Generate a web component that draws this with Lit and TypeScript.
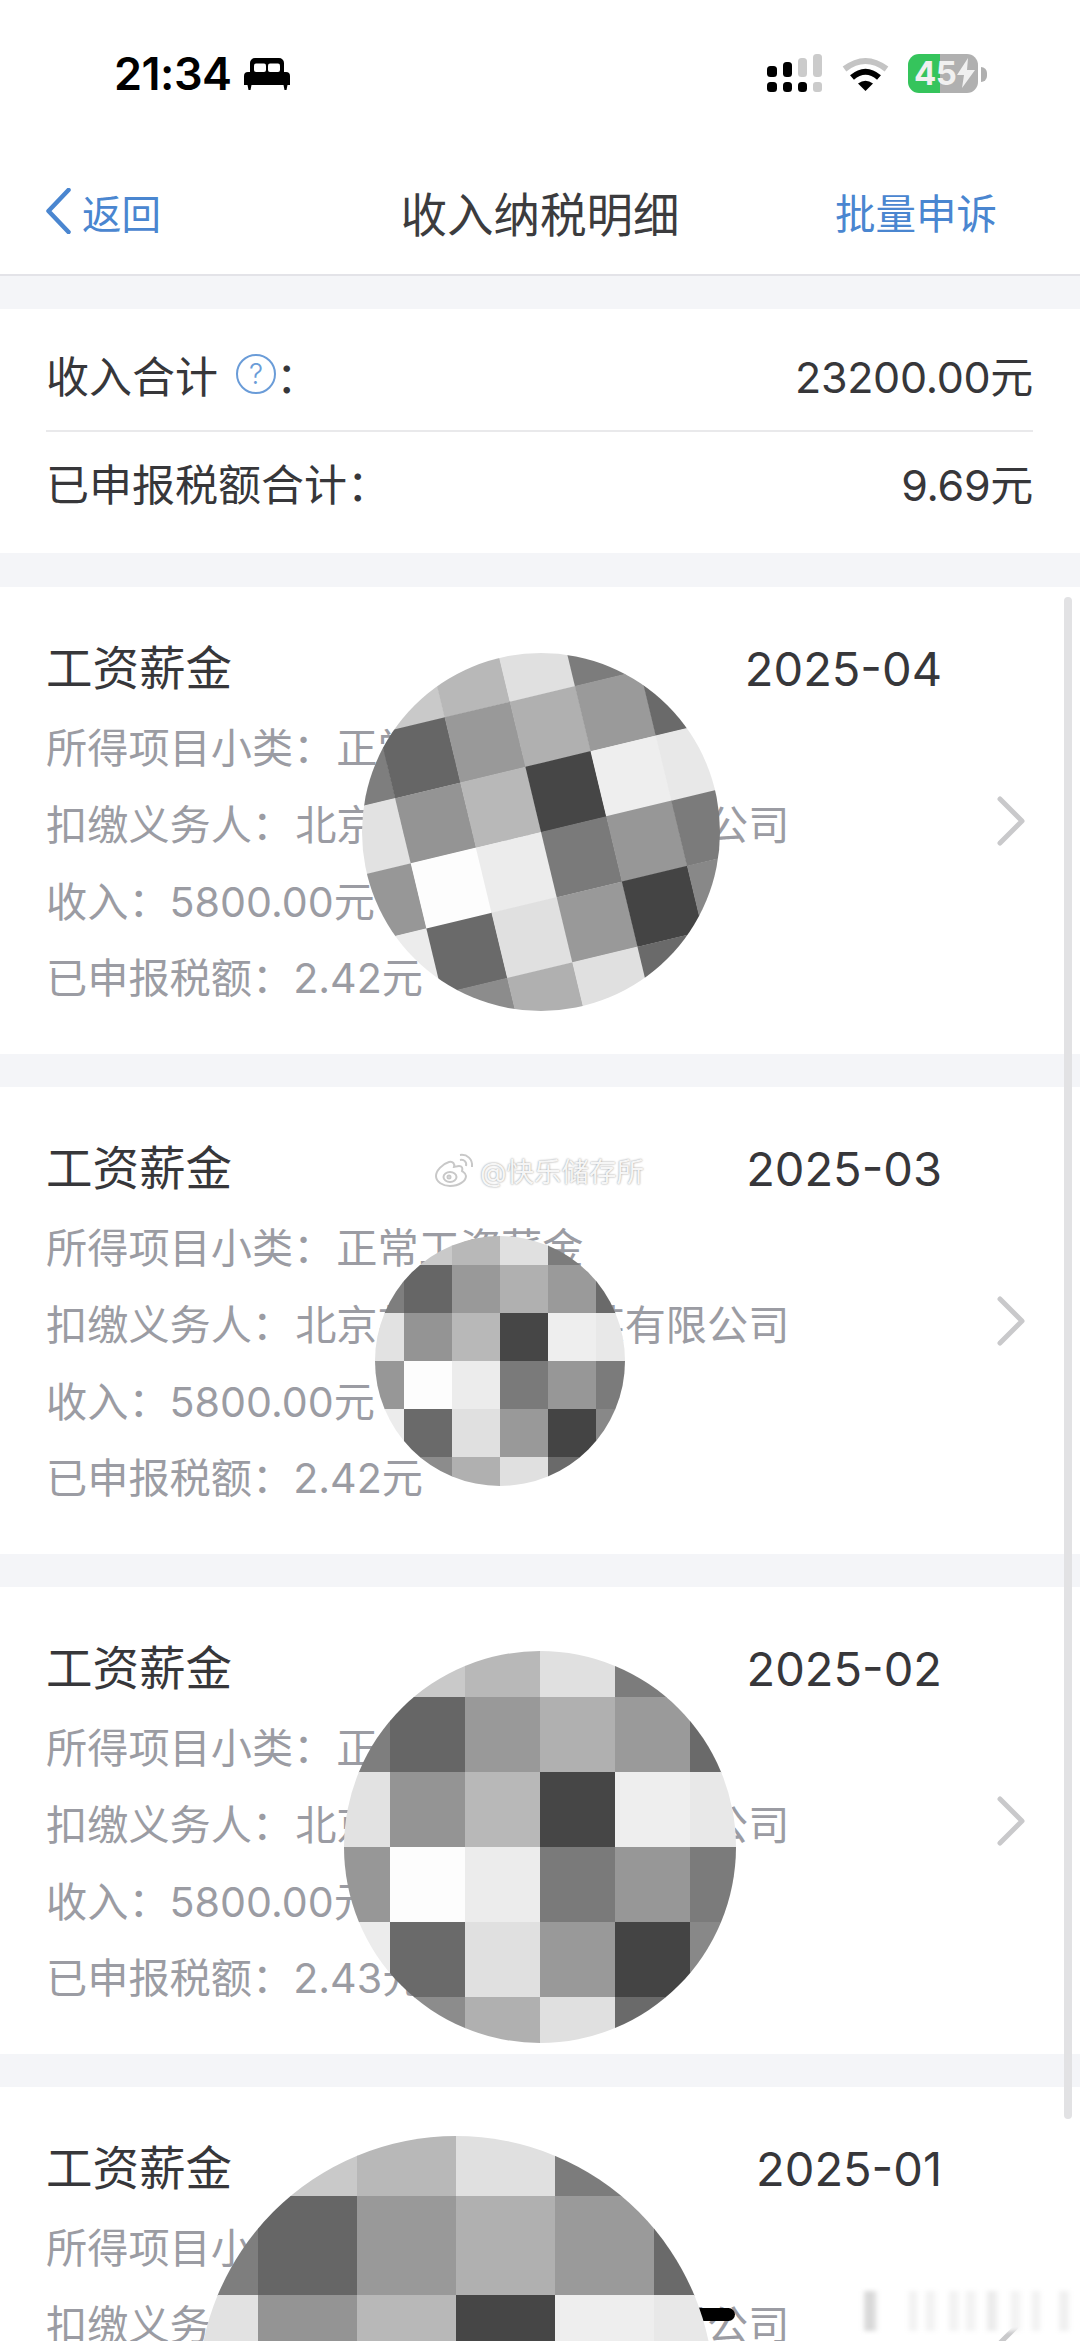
import { LitElement, html, css, svg } from "lit";
import { customElement } from "lit/decorators.js";

const TONES = [
  ["#ffffff", "#c9c9c9", "#b8b8b8", "#e0e0e0", "#7c7c7c", "#ffffff"],
  ["#7e7e7e", "#666666", "#999999", "#b0b0b0", "#9a9a9a", "#6a6a6a"],
  ["#e2e2e2", "#949494", "#b8b8b8", "#464646", "#eeeeee", "#e8e8e8"],
  ["#979797", "#fdfdfd", "#ececec", "#7a7a7a", "#979797", "#7b7b7b"],
  ["#ececec", "#6a6a6a", "#e0e0e0", "#999999", "#444444", "#888888"],
  ["#ffffff", "#8c8c8c", "#b0b0b0", "#e0e0e0", "#6a6a6a", "#ffffff"],
];

interface Blot { cx: number; cy: number; r: number; cell: number; rot: number; }
const BLOTS: Blot[] = [
  { cx: 541, cy: 832, r: 179, cell: 67, rot: -13.5 },
  { cx: 500, cy: 1361, r: 125, cell: 48, rot: 0 },
  { cx: 540, cy: 1847, r: 196, cell: 75, rot: 0 },
  { cx: 456, cy: 2394, r: 258, cell: 99, rot: 0 },
];

const CARDS = [
  { date: "2025-04", tax: "2.42元" },
  { date: "2025-03", tax: "2.42元" },
  { date: "2025-02", tax: "2.43元" },
  { date: "2025-01", tax: "2.43元" },
];

@customElement("app-root")
export class AppRoot extends LitElement {
  static styles = css`
    :host {
      display: block;
      position: relative;
      width: 1080px;
      height: 2341px;
      overflow: hidden;
      background: #f4f5f8;
      font-family: Inter, "Noto Sans CJK SC", sans-serif;
      color: #37373a;
    }
    .head { background: #fff; border-bottom: 2px solid #e3e3e8; height: 274px; }
    .status { height: 146px; display: flex; align-items: center; padding: 0 93px 0 114px; box-sizing: border-box; }
    .time { font-size: 45px; font-weight: 600; color: #000; letter-spacing: -0.5px; margin-top: 1px; }
    .bed { margin-left: 12px; margin-top: 2px; }
    .sys { margin-left: auto; display: flex; align-items: center; gap: 19px; }
    .batt {
      position: relative; width: 70px; height: 39px; border-radius: 11px;
      background: linear-gradient(90deg, #35c45c 0 46%, #b0b0b0 46% 100%);
      display: flex; align-items: center; padding-left: 6px; box-sizing: border-box;
      color: #f0f0f0; font-size: 33px; font-weight: 700; letter-spacing: -0.5px;
      margin-right: 9px;
    }
    .batt::after {
      content: ""; position: absolute; left: 73px; top: 13px; width: 6px; height: 15px;
      background: #b0b0b0; border-radius: 0 6px 6px 0;
    }
    .bolt { margin-left: 1px; }
    .nav { height: 130px; display: grid; grid-template-columns: 1fr auto 1fr; align-items: center; padding: 0 45px; }
    .back { display: flex; align-items: center; gap: 11px; color: #4a86d0; font-size: 39.5px; }
    .nav-title { font-size: 46.5px; color: #3c3c3e; }
    .action { justify-self: end; margin-right: 38px; color: #4a86d0; font-size: 40.5px; }
    .summary { margin-top: 33px; background: #fff; padding: 14px 47px 17px 46px; }
    .sum-row { display: flex; align-items: center; justify-content: space-between; font-size: 43px; height: 104px; box-sizing: border-box; padding-bottom: 5px; }
    .sum-row.first { height: 109px; border-bottom: 2px solid #e9e9eb; }
    .sum-label { display: flex; align-items: center; }
    .help {
      width: 40px; height: 40px; box-sizing: border-box; border: 2.5px solid #6a9cd8; border-radius: 50%;
      color: #6a9cd8; font-size: 28px; display: flex; align-items: center; justify-content: center;
      margin-left: 18px; font-weight: 300;
    }
    .sum-val { font-size: 43px; letter-spacing: -0.3px; }
    .list { margin-top: 34px; display: flex; flex-direction: column; gap: 33px; }
    .card { background: #fff; height: 467px; box-sizing: border-box; padding: 48px 54px 0 46px; display: flex; flex-shrink: 0; }
    .body { flex: 1; min-width: 0; }
    .title-row { display: flex; justify-content: space-between; align-items: center; height: 66px; margin-bottom: 9px; white-space: nowrap; }
    .name { font-size: 46.5px; padding-bottom: 8px; }
    .date { font-size: 47px; }
    .line { height: 76.75px; line-height: 76.75px; font-size: 41.2px; color: #9b9ca3; white-space: nowrap; }
    .val { margin-left: 2px; }
    .chev { align-self: center; margin-left: 54px; margin-top: -48px; flex-shrink: 0; }
    .blot { position: absolute; display: block; }
    .wm { position: absolute; left: 435px; top: 1150px; display: flex; align-items: center; gap: 6px;
      font-size: 27.5px; color: #f6f6f6; text-shadow: 0 0 2px #8c8c8c; white-space: nowrap; }
    .pill { position: absolute; left: 690px; top: 2308px; width: 45px; height: 13px; background: #000; border-radius: 7px; }
    .scroll { position: absolute; left: 1064px; top: 597px; width: 8px; height: 1522px; border-radius: 4px; background: #e2e2e4; }
    .smear {
      position: absolute; left: 860px; top: 2291px; width: 212px; height: 40px; filter: blur(2px);
      background: linear-gradient(90deg, #fff 0 1%, #d8d8d8 3% 6%, #fff 9% 22%, #f2f2f2 24% 26%, #fff 28% 30%, #f2f2f2 32% 34%, #fff 37% 41%, #f2f2f2 43% 45%, #fff 48% 49%, #f2f2f2 51% 53%, #fff 56% 59%, #ebebeb 61% 63%, #fff 66% 70%, #f2f2f2 72% 74%, #fff 77% 80%, #f2f2f2 82% 84%, #fff 86% 93%, #efefef 95% 97%, #fff 100%);
    }
  `;

  private blot(b: Blot, i: number) {
    const k = b.r / b.cell;
    const pos = `left:${b.cx - b.r}px;top:${b.cy - b.r}px;width:${2 * b.r}px;height:${2 * b.r}px`;
    const cells = TONES.flatMap((row, y) =>
      row.map((fill, x) => svg`<rect x=${x - 3} y=${y - 3} width="1.006" height="1.006" fill=${fill}></rect>`)
    );
    return html`<svg class="blot" style=${pos} viewBox="${-k} ${-k} ${2 * k} ${2 * k}">
      <defs><clipPath id="c${i}"><circle cx="0" cy="0" r=${k}></circle></clipPath></defs>
      <g clip-path="url(#c${i})"><g transform="rotate(${b.rot})">${cells}</g></g>
    </svg>`;
  }

  render() {
    return html`
      <div class="head">
        <div class="status">
          <span class="time">21:34</span>
          <svg class="bed" width="46" height="32" viewBox="0 0 46 32">
            <path fill="#000" d="M6 14V5a5 5 0 0 1 5-5h24a5 5 0 0 1 5 5v9h2a4 4 0 0 1 4 4v9h-2.500l-1 5h-2l-1-5H7.500l-1 5h-2l-1-5H0v-9a4 4 0 0 1 4-4z"></path>
            <rect x="10" y="5.500" width="12" height="8.500" rx="2" fill="#fff"></rect>
            <rect x="24" y="5.500" width="12" height="8.500" rx="2" fill="#fff"></rect>
          </svg>
          <div class="sys">
            <svg width="57" height="40" viewBox="0 0 57 40">
              <rect x="1" y="13" width="10" height="11" rx="3.500" fill="#000"></rect>
              <rect x="17" y="9" width="9" height="15" rx="3.500" fill="#000"></rect>
              <rect x="32" y="5" width="9" height="19" rx="3.500" fill="#cbcbcb"></rect>
              <rect x="47" y="1" width="9" height="23" rx="3.500" fill="#cbcbcb"></rect>
              <rect x="1" y="29" width="10" height="10" rx="3.500" fill="#000"></rect>
              <rect x="17" y="29" width="9" height="10" rx="3.500" fill="#000"></rect>
              <rect x="32" y="29" width="9" height="10" rx="3.500" fill="#000"></rect>
              <rect x="47" y="29" width="9" height="10" rx="3" fill="#cbcbcb"></rect>
            </svg>
            <svg width="47" height="35" viewBox="0 0 47 35">
              <path d="M2.500 13Q23.500-3 44.500 13" fill="none" stroke="#c4c4c4" stroke-width="6"></path>
              <path d="M10 21.500Q23.500 10 37 21.500" fill="none" stroke="#000" stroke-width="6"></path>
              <path d="M16 27.500Q23.500 22 31 27.500L23.500 35z" fill="#000"></path>
            </svg>
            <div class="batt">45<svg class="bolt" width="18" height="30" viewBox="0 0 18 30"><path fill="#f0f0f0" d="M11 0L0 17h7l-2 13L18 12h-8z"></path></svg></div>
          </div>
        </div>
        <div class="nav">
          <div class="back">
            <svg width="26" height="46" viewBox="0 0 26 46"><path d="M23.500 2L3.500 23l20 21" fill="none" stroke="#4a86d0" stroke-width="4.500" stroke-linecap="round" stroke-linejoin="round"></path></svg>
            返回
          </div>
          <div class="nav-title">收入纳税明细</div>
          <div class="action">批量申诉</div>
        </div>
      </div>

      <section class="summary">
        <div class="sum-row first">
          <div class="sum-label">收入合计<span class="help">?</span>：</div>
          <div class="sum-val">23200.00元</div>
        </div>
        <div class="sum-row">
          <div class="sum-label">已申报税额合计：</div>
          <div class="sum-val">9.69元</div>
        </div>
      </section>

      <div class="list">
        ${CARDS.map(c => html`
          <article class="card">
            <div class="body">
              <div class="title-row"><span class="name">工资薪金</span><span class="date">${c.date}</span></div>
              <div class="line">所得项目小类：<span class="val">正常工资薪金</span></div>
              <div class="line">扣缴义务人：<span class="val">北京某某某某某某有限公司</span></div>
              <div class="line">收入：5800.00元</div>
              <div class="line">已申报税额：${c.tax}</div>
            </div>
            <svg class="chev" width="30" height="50" viewBox="0 0 30 50"><path d="M4 3l22 22L4 47" fill="none" stroke="#c9c9cb" stroke-width="5" stroke-linecap="round" stroke-linejoin="round"></path></svg>
          </article>
        `)}
      </div>

      <div class="pill"></div>
      <div class="scroll"></div>
      ${BLOTS.map((b, i) => this.blot(b, i))}
      <div class="smear"></div>

      <div class="wm">
        <svg width="39" height="34" viewBox="0 0 39 34" fill="none" stroke="#c8c8c8" stroke-width="2">
          <path d="M14 9C7 11 1 18 1 23c0 6 7 10 14 10 9 0 16-5 16-10 0-3-3-4-4-5 1-3 0-5-3-5-2 0-4 1-5 1 1-3-1-6-5-5z"></path>
          <ellipse cx="15" cy="24" rx="6.500" ry="5"></ellipse>
          <circle cx="14" cy="24" r="1.500"></circle>
          <path d="M25 7c4-1 7 2 6 6"></path>
          <path d="M25 2c7-1 13 4 12 12"></path>
        </svg>
        <span>@快乐储存所</span>
      </div>
    `;
  }
}
